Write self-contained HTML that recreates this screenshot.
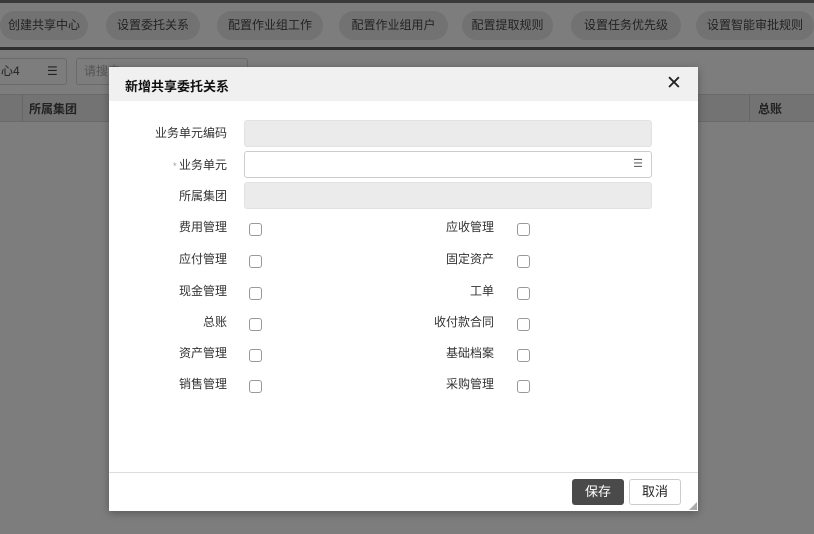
<!DOCTYPE html>
<html><head><meta charset="utf-8"><style>
*{margin:0;padding:0;box-sizing:border-box}
body{width:814px;height:534px;overflow:hidden;background:#7d7d7d;font-family:"Liberation Sans","Noto Sans CJK SC",sans-serif;font-size:12px;color:#222;position:relative}
.a{position:absolute}
.tb{left:0;top:0;width:814px;height:3px;background:#3a3a3a}
.tb2{left:0;top:47px;width:814px;height:3px;background:#2e2e2e}
.btn{position:absolute;top:11px;height:29px;border-radius:15px;background:#727272;color:#222;line-height:29px;text-align:center;font-size:12px}
.inp{position:absolute;border:1px solid #6a6a6a;border-radius:3px;background:#7d7d7d}
.th{left:0;top:94px;width:814px;height:28px;background:#737373;border-top:1px solid #6a6a6a;border-bottom:1px solid #6a6a6a}
.dlg{left:109px;top:67px;width:589px;height:444px;background:#fff;box-shadow:0 2px 8px rgba(0,0,0,.3)}
.hd{left:0;top:0;width:589px;height:34px;background:#f0f0f0}
.lb{position:absolute;text-align:right;color:#333;font-size:12px;line-height:16px}
.fi{position:absolute;left:135px;width:408px;height:27px;border-radius:3px;border:1px solid #ddd}
.cb{position:absolute;width:13px;height:13px;border:1px solid #999;border-radius:3px;background:#fff}
</style></head><body>
<div class="a tb"></div>
<div class="btn" style="left:0;width:88px">创建共享中心</div>
<div class="btn" style="left:106px;width:94px">设置委托关系</div>
<div class="btn" style="left:217px;width:106px">配置作业组工作</div>
<div class="btn" style="left:339px;width:109px">配置作业组用户</div>
<div class="btn" style="left:462px;width:91px">配置提取规则</div>
<div class="btn" style="left:571px;width:110px">设置任务优先级</div>
<div class="btn" style="left:696px;width:118px">设置智能审批规则</div>
<div class="a tb2"></div>
<div class="inp" style="left:-4px;top:58px;width:71px;height:27px;line-height:25px;padding-left:4px">心4<span style="position:absolute;left:50px">☰</span></div>
<div class="inp" style="left:76px;top:58px;width:172px;height:27px;line-height:25px;padding-left:7px;color:#555">请搜索</div>
<div class="a th"></div>
<div class="a" style="left:22px;top:94px;width:1px;height:28px;background:#666"></div>
<div class="a" style="left:29px;top:100px;font-weight:bold;color:#222">所属集团</div>
<div class="a" style="left:749px;top:94px;width:1px;height:28px;background:#666"></div>
<div class="a" style="left:758px;top:100px;font-weight:bold;color:#222">总账</div>
<div class="a dlg">
<div class="a hd"></div>
<div class="a" style="left:16px;top:9px;font-size:13px;font-weight:bold;color:#111">新增共享委托关系</div>
<div class="a" style="left:557px;top:5px;font-size:19px;color:#222">✕</div>
<div class="lb" style="left:20px;top:58px;width:98px">业务单元编码</div>
<div class="fi" style="top:53px;background:#ebebeb;border-color:#e2e2e2"></div>
<div class="lb" style="left:20px;top:90px;width:98px"><span style="color:#999;font-size:9px">* </span>业务单元</div>
<div class="fi" style="top:84px;background:#fff;border-color:#ccc"><span style="position:absolute;right:8px;top:5px;color:#666;font-size:11px">☰</span></div>
<div class="lb" style="left:20px;top:121px;width:98px">所属集团</div>
<div class="fi" style="top:115px;background:#ebebeb;border-color:#e2e2e2"></div>
<div class="lb" style="left:20px;top:152px;width:98px">费用管理</div><div class="cb" style="left:140px;top:156px"></div>
<div class="lb" style="left:20px;top:184px;width:98px">应付管理</div><div class="cb" style="left:140px;top:188px"></div>
<div class="lb" style="left:20px;top:216px;width:98px">现金管理</div><div class="cb" style="left:140px;top:220px"></div>
<div class="lb" style="left:20px;top:247px;width:98px">总账</div><div class="cb" style="left:140px;top:251px"></div>
<div class="lb" style="left:20px;top:278px;width:98px">资产管理</div><div class="cb" style="left:140px;top:282px"></div>
<div class="lb" style="left:20px;top:309px;width:98px">销售管理</div><div class="cb" style="left:140px;top:313px"></div>
<div class="lb" style="left:285px;top:152px;width:100px">应收管理</div><div class="cb" style="left:408px;top:156px"></div>
<div class="lb" style="left:285px;top:184px;width:100px">固定资产</div><div class="cb" style="left:408px;top:188px"></div>
<div class="lb" style="left:285px;top:216px;width:100px">工单</div><div class="cb" style="left:408px;top:220px"></div>
<div class="lb" style="left:285px;top:247px;width:100px">收付款合同</div><div class="cb" style="left:408px;top:251px"></div>
<div class="lb" style="left:285px;top:278px;width:100px">基础档案</div><div class="cb" style="left:408px;top:282px"></div>
<div class="lb" style="left:285px;top:309px;width:100px">采购管理</div><div class="cb" style="left:408px;top:313px"></div>
<div class="a" style="left:0;top:405px;width:589px;height:1px;background:#ddd"></div>
<div class="a" style="left:463px;top:412px;width:52px;height:26px;background:#4a4a4a;border-radius:3px;color:#fff;font-size:13px;line-height:26px;text-align:center">保存</div>
<div class="a" style="left:520px;top:412px;width:52px;height:26px;background:#fff;border:1px solid #ccc;border-radius:3px;color:#222;font-size:13px;line-height:24px;text-align:center">取消</div>
<div class="a" style="left:580px;top:434px;font-size:8px;color:#aaa">◢</div>
</div>
</body></html>
